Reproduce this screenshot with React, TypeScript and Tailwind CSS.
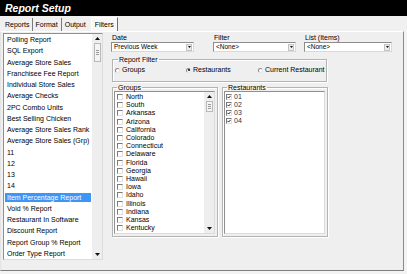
import React from "react";

const reports = [
  "Polling Report",
  "SQL Export",
  "Average Store Sales",
  "Franchisee Fee Report",
  "Individual Store Sales",
  "Average Checks",
  "2PC Combo Units",
  "Best Selling Chicken",
  "Average Store Sales Rank",
  "Average Store Sales (Grp)",
  "11",
  "12",
  "13",
  "14",
  "Item Percentage Report",
  "Void % Report",
  "Restaurant In Software",
  "Discount Report",
  "Report Group % Report",
  "Order Type Report",
];

const groups = [
  "North",
  "South",
  "Arkansas",
  "Arizona",
  "California",
  "Colorado",
  "Connecticut",
  "Delaware",
  "Florida",
  "Georgia",
  "Hawaii",
  "Iowa",
  "Idaho",
  "Illinois",
  "Indiana",
  "Kansas",
  "Kentucky",
];

const restaurants = ["01", "02", "03", "04"];

function UpArrow() {
  return (
    <svg width="5" height="3" viewBox="0 0 5 3" className="block">
      <polygon points="2.5,0 5,3 0,3" fill="#111" />
    </svg>
  );
}
function DownArrow() {
  return (
    <svg width="5" height="3" viewBox="0 0 5 3" className="block">
      <polygon points="0,0 5,0 2.5,3" fill="#111" />
    </svg>
  );
}

function Scrollbar({ thumbH }: { thumbH: string }) {
  return (
    <div className="w-[10px] h-full bg-[#eeeeee] flex flex-col items-center">
      <div className="h-[9px] flex items-center justify-center">
        <UpArrow />
      </div>
      <div className={`w-[7px] ${thumbH} bg-[#f4f4f4] border border-[#b9b9b9] flex flex-col items-center justify-center gap-[1px]`}>
        <div className="w-[3px] h-px bg-[#9a9a9a]" />
        <div className="w-[3px] h-px bg-[#9a9a9a]" />
        <div className="w-[3px] h-px bg-[#9a9a9a]" />
      </div>
      <div className="flex-1" />
      <div className="h-[9px] flex items-center justify-center">
        <DownArrow />
      </div>
    </div>
  );
}

function Select({ value, w }: { value: string; w: string }) {
  return (
    <div className={`${w} h-[10px] bg-white border border-[#8c8c8c] border-r-[#d9d9d9] border-b-[#d9d9d9] flex items-center`}>
      <span className="flex-1 pl-[2px] text-[6.5px] leading-[8px] truncate">{value}</span>
      <div className="w-[6px] h-[7px] mr-[1px] bg-[#ececec] border border-[#c4c4c4] flex items-center justify-center">
        <svg width="3" height="2" viewBox="0 0 3 2" className="block">
          <polygon points="0,0 3,0 1.5,2" fill="#111" />
        </svg>
      </div>
    </div>
  );
}

function Radio({ checked }: { checked?: boolean }) {
  return (
    <div className="w-[5px] h-[5px] shrink-0 rounded-full border border-[#8a8a8a] border-r-[#e6e6e6] border-b-[#e6e6e6] bg-white flex items-center justify-center">
      {checked && <div className="w-[2px] h-[2px] rounded-full bg-black" />}
    </div>
  );
}

function Check({ checked }: { checked?: boolean }) {
  return (
    <div className="w-[6px] h-[6px] shrink-0 border border-[#7a7a7a] border-r-[#e0e0e0] border-b-[#e0e0e0] bg-white flex items-center justify-center">
      {checked && (
        <svg width="5" height="4" viewBox="0 0 5 4" className="block">
          <polyline points="0.5,1.8 2,3.3 4.6,0.5" fill="none" stroke="#000" strokeWidth="1.1" />
        </svg>
      )}
    </div>
  );
}

export default function App() {
  return (
    <div className="w-[407px] h-[274px] overflow-hidden bg-[#f3f3f3] text-black font-['Liberation_Sans',Arial,sans-serif]">
      {/* Title bar */}
      <div className="h-[16px] bg-black flex items-center pl-[5px]">
        <span className="text-white font-bold italic text-[10.5px] leading-[12px]">Report Setup</span>
      </div>
      {/* Tabs */}
      <div className="h-[15px] flex items-end pl-[3px] text-[7px] leading-[8px] bg-[#f0f0f0]">
        <div className="h-[13px] px-[2px] flex items-center border-r border-[#7a7a7a]">Reports</div>
        <div className="h-[13px] px-[3px] flex items-center border-r border-[#7a7a7a]">Format</div>
        <div className="h-[13px] px-[3px] flex items-center">Output</div>
        <div className="h-[14px] ml-[2px] px-[3px] flex items-center bg-[#f7f7f7] border-t border-l border-white border-r border-r-[#6e6e6e]">
          Filters
        </div>
      </div>
      {/* Panel */}
      <div className="w-[404px] h-[240px] bg-[#efefef] border-t border-t-white border-l border-l-[#e4e4e4] border-r border-r-[#8a8a8a] border-b border-b-[#7d7d7d] flex items-start">
        {/* Report list */}
        <div className="ml-[2px] mt-[1px] w-[100px] h-[227px] bg-white border border-[#8f8f8f] border-r-[#dcdcdc] border-b-[#dcdcdc] flex">
          <div className="flex-1 flex flex-col pl-[1px] pr-[1px]">
            {reports.map((r, i) => (
              <div key={i} className="h-[11.29px] flex items-center">
                <span
                  className={`w-full pl-[2px] text-[7px] leading-[9px] whitespace-nowrap ${
                    r === "Item Percentage Report" ? "bg-[#3b96f5] text-white" : ""
                  }`}
                >
                  {r}
                </span>
              </div>
            ))}
          </div>
          <Scrollbar thumbH="h-[19px]" />
        </div>

        {/* Right side */}
        <div className="ml-[8px] pt-[1px] flex flex-col">
          <div className="flex gap-[19px]">
            <div className="flex flex-col">
              <span className="pl-[1px] text-[7px] leading-[9px]">Date</span>
              <Select value="Previous Week" w="w-[83px]" />
            </div>
            <div className="flex flex-col">
              <span className="pl-[1px] text-[7px] leading-[9px]">Filter</span>
              <Select value="<None>" w="w-[83px]" />
            </div>
            <div className="flex flex-col -ml-[11px]">
              <span className="pl-[1px] text-[7px] leading-[9px]">List (Items)</span>
              <Select value="<None>" w="w-[88px]" />
            </div>
          </div>

          <fieldset className="mt-[4px] ml-[1px] w-[215px] h-[26px] border border-[#b4b4b4] shadow-[inset_1px_1px_0_white,1px_1px_0_white] pl-[2px] pr-0">
            <legend className="ml-[3px] px-[1px] text-[7px] leading-[7px]">Report Filter</legend>
            <div className="flex items-center h-[14px] text-[7px] whitespace-nowrap">
              <div className="flex items-center gap-[2px] w-[71px] shrink-0">
                <Radio />
                <span>Groups</span>
              </div>
              <div className="flex items-center gap-[2px] w-[72px] shrink-0">
                <Radio checked />
                <span>Restaurants</span>
              </div>
              <div className="flex items-center gap-[2px] shrink-0">
                <Radio />
                <span>Current Restaurant</span>
              </div>
            </div>
          </fieldset>

          <div className="flex gap-[4px] mt-[2px] ml-[1px]">
            <fieldset className="w-[106px] h-[153px] border border-[#b4b4b4] shadow-[inset_1px_1px_0_white,1px_1px_0_white] pl-[1px] pr-[2px] pb-[2px]">
              <legend className="ml-[3px] px-[1px] text-[7px] leading-[7px]">Groups</legend>
              <div className="h-full bg-white border border-[#8f8f8f] border-r-[#dcdcdc] border-b-[#dcdcdc] flex">
                <div className="flex-1 flex flex-col pt-[1px] pl-[2px]">
                  {groups.map((g) => (
                    <div key={g} className="h-[8.2px] flex items-center gap-[3px]">
                      <Check />
                      <span className="text-[7px] leading-[8px]">{g}</span>
                    </div>
                  ))}
                </div>
                <Scrollbar thumbH="h-[11px]" />
              </div>
            </fieldset>
            <fieldset className="w-[106px] h-[153px] border border-[#b4b4b4] shadow-[inset_1px_1px_0_white,1px_1px_0_white] pl-[1px] pr-[2px] pb-[2px]">
              <legend className="ml-[3px] px-[1px] text-[7px] leading-[7px]">Restaurants</legend>
              <div className="h-full bg-white border border-[#8f8f8f] border-r-[#dcdcdc] border-b-[#dcdcdc] flex flex-col pt-[1px] pl-[1px]">
                {restaurants.map((r) => (
                  <div key={r} className="h-[8.1px] flex items-center gap-[2px]">
                    <Check checked />
                    <span className="text-[7px] leading-[8px] text-[#333]">{r}</span>
                  </div>
                ))}
              </div>
            </fieldset>
          </div>
        </div>
      </div>
    </div>
  );
}
